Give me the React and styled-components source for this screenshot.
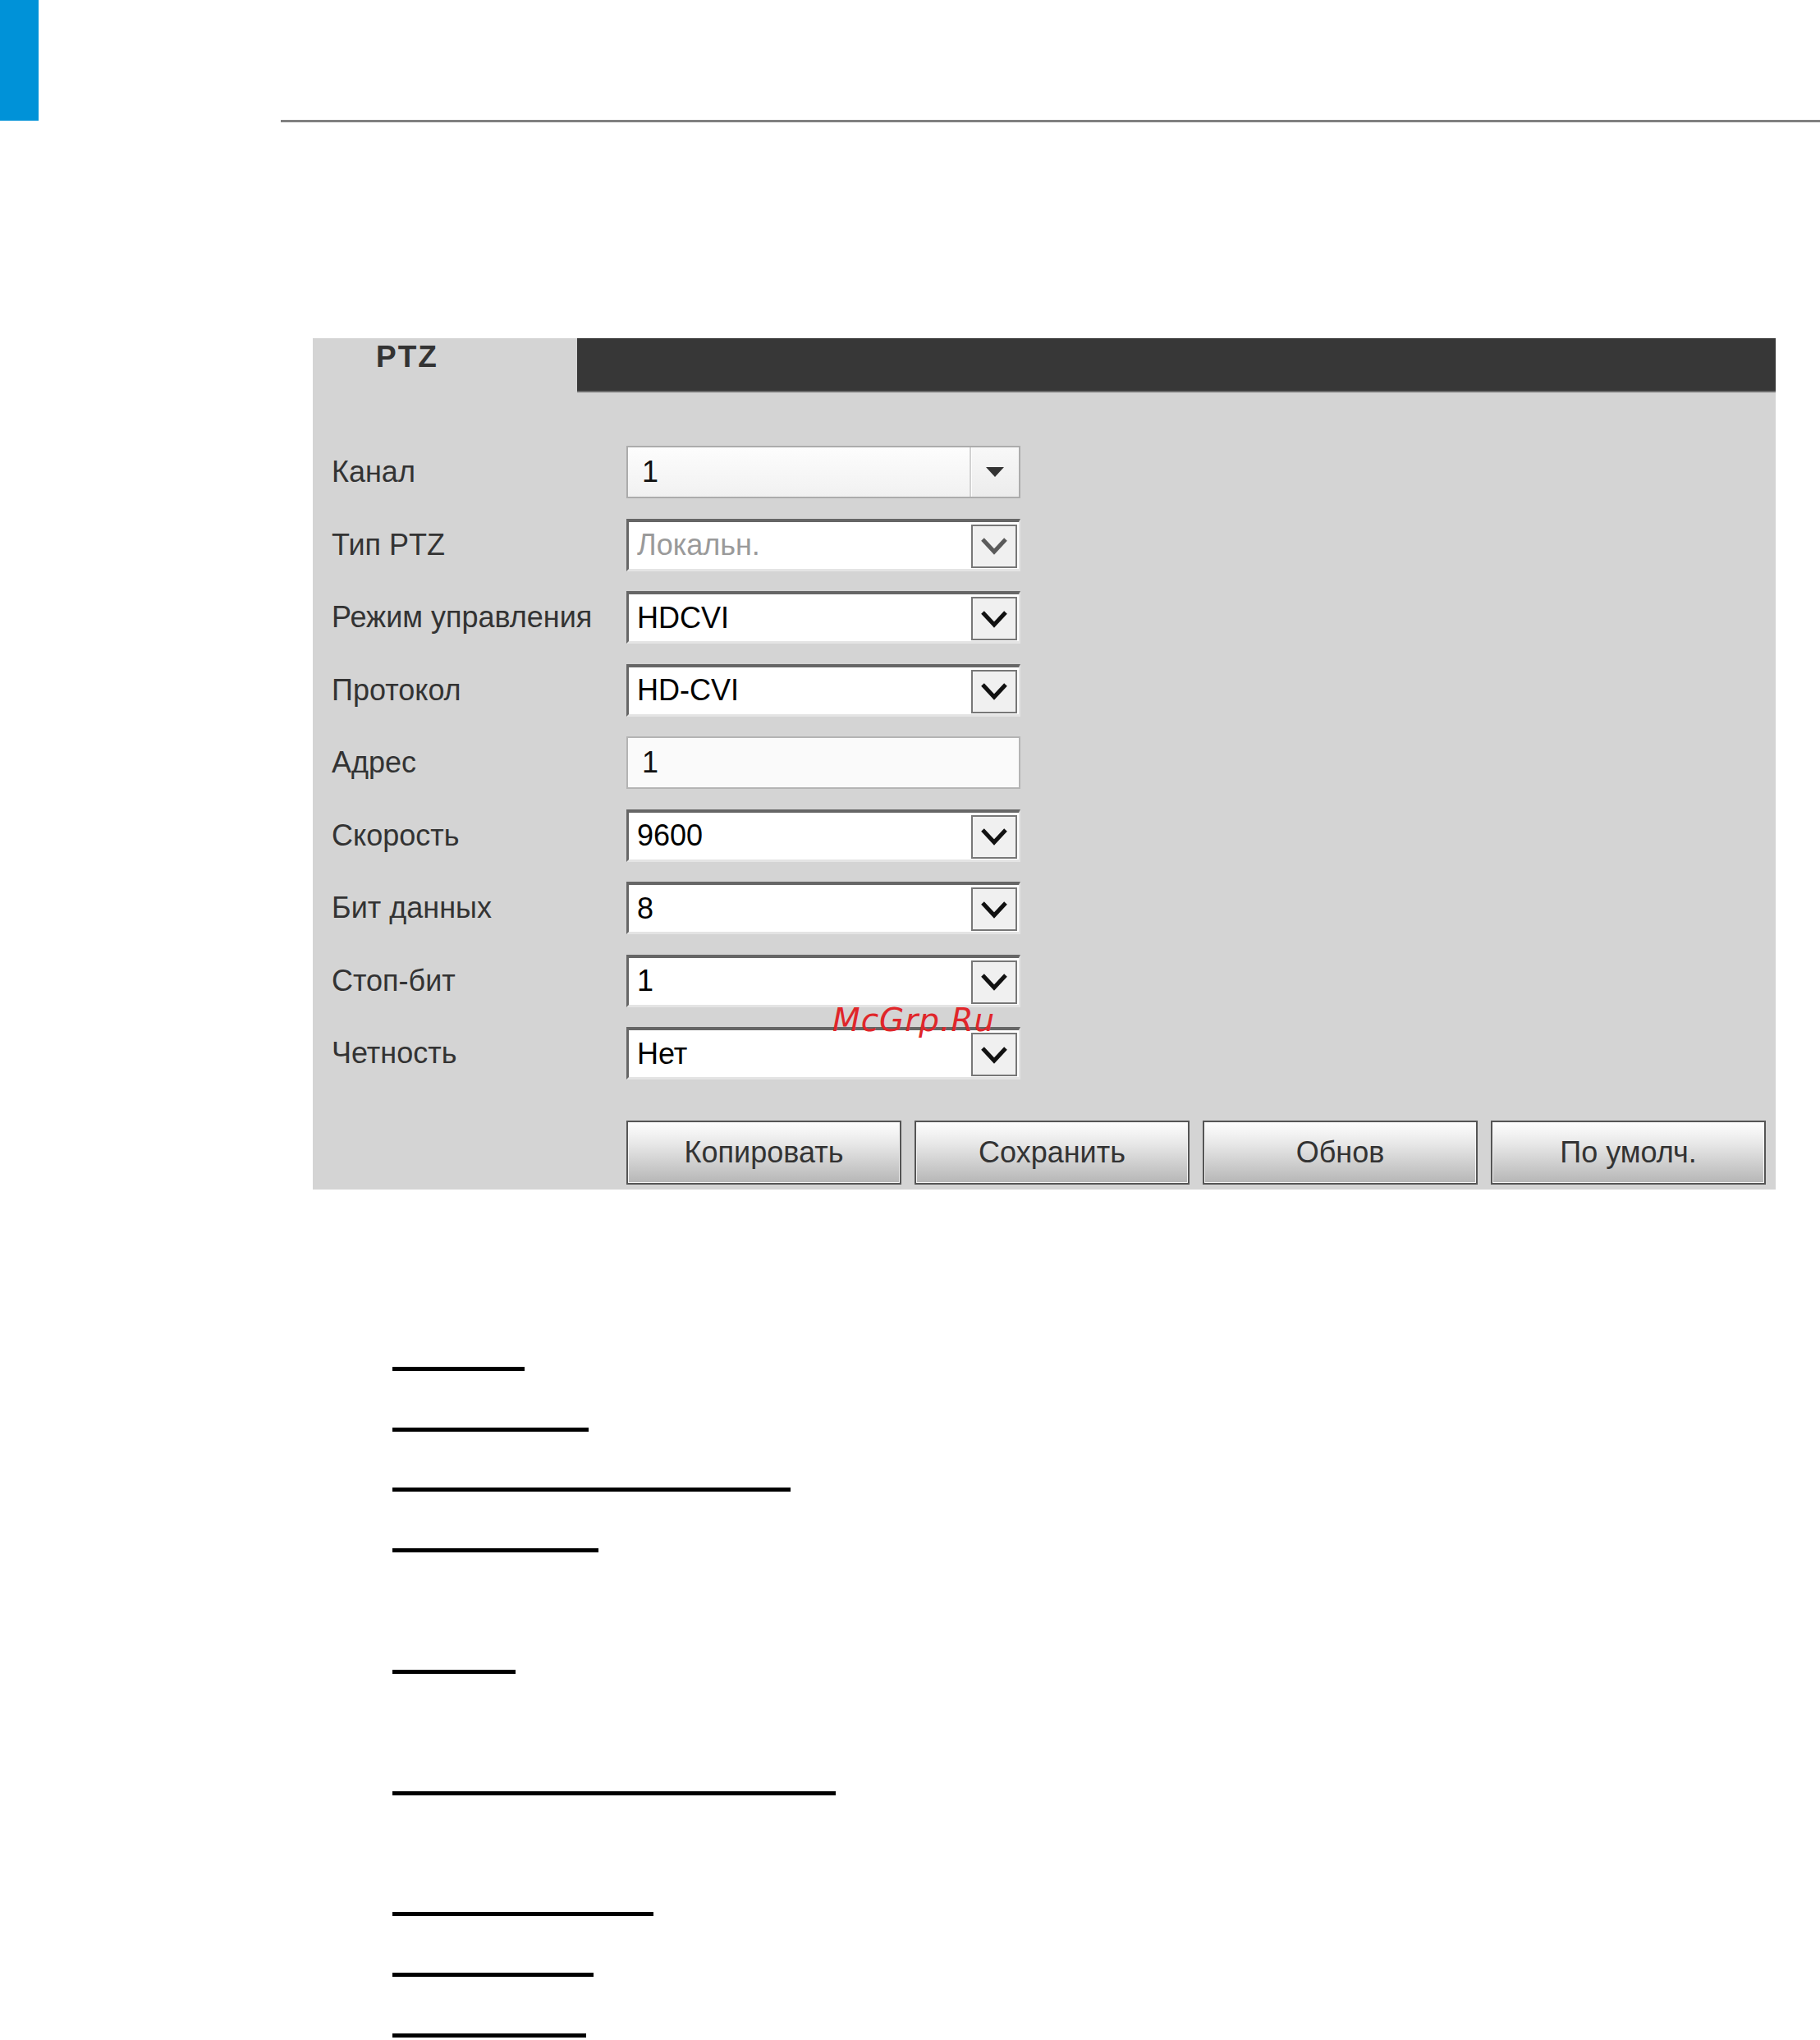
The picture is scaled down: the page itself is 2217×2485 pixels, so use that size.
import React from "react";
import styled, { createGlobalStyle } from "styled-components";

const GlobalStyle = createGlobalStyle`
  html, body {
    margin: 0;
    padding: 0;
    background: #ffffff;
  }
  body {
    font-family: "Liberation Sans", Arial, sans-serif;
  }
`;

const fields = [
  { label: "Канал", kind: "modern", value: "1" },
  { label: "Тип PTZ", kind: "classic", value: "Локальн.", disabled: true },
  { label: "Режим управления", kind: "classic", value: "HDCVI" },
  { label: "Протокол", kind: "classic", value: "HD-CVI" },
  { label: "Адрес", kind: "input", value: "1" },
  { label: "Скорость", kind: "classic", value: "9600" },
  { label: "Бит данных", kind: "classic", value: "8" },
  { label: "Стоп-бит", kind: "classic", value: "1" },
  { label: "Четность", kind: "classic", value: "Нет" },
];

const buttons = ["Копировать", "Сохранить", "Обнов", "По умолч."];

// underline rules under the panel: [top spacing, width]
const rules = [
  [216, 161],
  [69, 239],
  [68, 485],
  [69, 251],
  [143, 150],
  [143, 540],
  [142, 318],
  [69, 245],
  [69, 236],
];

function Chevron({ disabled }) {
  return (
    <svg width="34" height="22" viewBox="0 0 34 22">
      <polyline
        points="3,3 17,18 31,3"
        fill="none"
        stroke={disabled ? "#5a5a5a" : "#111"}
        strokeWidth="5"
        strokeLinejoin="miter"
      />
    </svg>
  );
}

function Field({ field }) {
  if (field.kind === "modern") {
    return (
      <ModernSelect>
        <ModernValue>{field.value}</ModernValue>
        <ModernArrow>
          <svg width="22" height="12" viewBox="0 0 22 12">
            <polygon points="0,0 22,0 11,12" fill="#333" />
          </svg>
        </ModernArrow>
      </ModernSelect>
    );
  }
  if (field.kind === "input") {
    return <TextInput>{field.value}</TextInput>;
  }
  return (
    <ClassicSelect>
      <ClassicValue $disabled={field.disabled}>{field.value}</ClassicValue>
      <ArrowButton>
        <Chevron disabled={field.disabled} />
      </ArrowButton>
    </ClassicSelect>
  );
}

export default function App() {
  return (
    <Page>
      <GlobalStyle />
      <TopBar>
        <BlueTab />
        <TopRule />
      </TopBar>

      <Panel>
        <TabBar>
          <Tab>PTZ</Tab>
          <TabFill />
        </TabBar>

        <Form>
          {fields.map((f) => (
            <React.Fragment key={f.label}>
              <Label>{f.label}</Label>
              <Field field={f} />
            </React.Fragment>
          ))}
        </Form>

        <ButtonRow>
          {buttons.map((b) => (
            <Button key={b}>{b}</Button>
          ))}
        </ButtonRow>

        <Watermark>McGrp.Ru</Watermark>
      </Panel>

      <RuleList>
        {rules.map(([top, width], i) => (
          <Underline key={i} $top={top} $width={width} />
        ))}
      </RuleList>
    </Page>
  );
}

const Page = styled.div`
  width: 2217px;
  min-height: 2485px;
  background: #fff;
  overflow: hidden;
`;

const TopBar = styled.div`
  display: flex;
  align-items: flex-end;
  height: 149px;
`;

const BlueTab = styled.div`
  width: 47px;
  height: 147px;
  align-self: flex-start;
  background: #0092d8;
`;

const TopRule = styled.div`
  flex: 1;
  height: 3px;
  margin-left: 295px;
  background: #808080;
`;

const Panel = styled.div`
  position: relative;
  width: 1782px;
  height: 1037px;
  margin: 263px 0 0 381px;
  background: #d4d4d4;
  box-sizing: border-box;
`;

const TabBar = styled.div`
  display: flex;
  height: 66px;
`;

const Tab = styled.div`
  width: 322px;
  box-sizing: border-box;
  padding: 2px 0 0 77px;
  font-size: 37px;
  font-weight: bold;
  letter-spacing: 2px;
  color: #333;
`;

const TabFill = styled.div`
  flex: 1;
  height: 64px;
  background: #373737;
  border-bottom: 2px solid #6c6c6c;
`;

const Form = styled.div`
  display: grid;
  grid-template-columns: 359px 480px;
  grid-auto-rows: 64px;
  row-gap: 24.5px;
  align-items: center;
  padding: 65px 0 0 23px;
`;

const Label = styled.div`
  font-size: 36px;
  color: #333;
  white-space: nowrap;
`;

const ModernSelect = styled.div`
  display: flex;
  height: 64px;
  box-sizing: border-box;
  border: 2px solid #acacac;
  background: linear-gradient(#fdfdfd, #f1f1f1);
`;

const ModernValue = styled.div`
  flex: 1;
  display: flex;
  align-items: center;
  padding-left: 17px;
  font-size: 36px;
  color: #111;
`;

const ModernArrow = styled.div`
  width: 58px;
  display: flex;
  align-items: center;
  justify-content: center;
  border-left: 2px solid #d2d2d2;
  box-shadow: inset 1px 0 0 #ffffff;
  background: linear-gradient(#f8f8f8, #ececec);
`;

const ClassicSelect = styled.div`
  display: flex;
  height: 64px;
  box-sizing: border-box;
  border-top: 4px solid #666;
  border-left: 3px solid #666;
  border-right: 2px solid #e4e4e4;
  border-bottom: 3px solid #e4e4e4;
  background: #fff;
`;

const ClassicValue = styled.div`
  flex: 1;
  display: flex;
  align-items: center;
  padding-left: 10px;
  font-size: 36px;
  color: ${(p) => (p.$disabled ? "#9a9a9a" : "#000")};
`;

const ArrowButton = styled.div`
  width: 56px;
  margin: 3px 2px 1px 0;
  box-sizing: border-box;
  display: flex;
  align-items: center;
  justify-content: center;
  border: 2px solid #777;
  background: #f0f0f0;
`;

const TextInput = styled.div`
  height: 64px;
  box-sizing: border-box;
  display: flex;
  align-items: center;
  padding-left: 17px;
  border: 2px solid #b4b4b4;
  background: #fafafa;
  font-size: 36px;
  color: #111;
`;

const ButtonRow = styled.div`
  display: flex;
  gap: 16px;
  margin: 50px 0 0 382px;
`;

const Button = styled.div`
  width: 335px;
  height: 78px;
  box-sizing: border-box;
  display: flex;
  align-items: center;
  justify-content: center;
  border: 2px solid #555;
  box-shadow: inset 0 0 0 1px #f6f6f6;
  background: linear-gradient(#fefefe, #e8e8e8 35%, #b6b6b6);
  font-size: 36px;
  color: #333;
`;

const Watermark = styled.div`
  position: absolute;
  left: 633px;
  top: 808px;
  font-family: "DejaVu Sans", sans-serif;
  font-style: italic;
  font-size: 39px;
  letter-spacing: 1px;
  color: #e0262a;
`;

const RuleList = styled.div`
  display: flex;
  flex-direction: column;
  align-items: flex-start;
  padding-left: 478px;
`;

const Underline = styled.div`
  width: ${(p) => p.$width}px;
  height: 5px;
  margin-top: ${(p) => p.$top}px;
  background: #000;
`;
